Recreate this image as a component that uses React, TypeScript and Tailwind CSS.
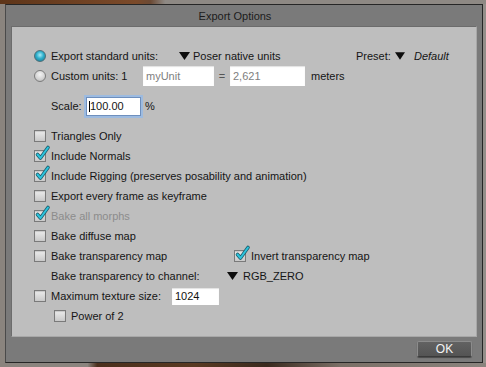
import React from "react"

function Check({ checked = false }: { checked?: boolean }) {
  return (
    <span className="relative block w-[12px] h-[12px] shrink-0 border border-[#7a7a7a] bg-[linear-gradient(#ececec,#c9c9c9)] shadow-[inset_0_1px_1px_rgba(0,0,0,0.15)]">
      {checked && (
        <svg className="absolute -top-[5px] left-[0px] w-[15px] h-[15px] overflow-visible" viewBox="0 0 15 15">
          <polyline points="2.5,8.5 5.5,12 13,1.5" fill="none" stroke="#1d5f6e" strokeWidth="3.6" strokeLinecap="round" strokeLinejoin="round" />
          <polyline points="2.5,8.5 5.5,12 13,1.5" fill="none" stroke="#2cc3dc" strokeWidth="2" strokeLinecap="round" strokeLinejoin="round" />
        </svg>
      )}
    </span>
  )
}

function Radio({ on = false }: { on?: boolean }) {
  return (
    <span
      className={`block w-[12px] h-[12px] shrink-0 rounded-full border ${on ? "border-[#4d6f78] bg-[radial-gradient(circle_at_50%_40%,#a8ecf8_0%,#2fb0cc_45%,#15708a_100%)]" : "border-[#7c7c7c] bg-[radial-gradient(circle_at_50%_35%,#f4f4f4_0%,#d2d2d2_60%,#a9a9a9_100%)]"}`}
    />
  )
}

function Tri({ className = "" }: { className?: string }) {
  return (
    <svg className={`shrink-0 ${className}`} width="11" height="8" viewBox="0 0 11 8">
      <polygon points="0,0 11,0 5.5,8" fill="#0d0d0d" />
    </svg>
  )
}

function Row({ children, className = "" }: { children: React.ReactNode; className?: string }) {
  return <div className={`flex items-center h-[20px] ${className}`}>{children}</div>
}

function Field({ text, className = "" }: { text: React.ReactNode; className?: string }) {
  return (
    <span className={`flex items-center shrink-0 bg-white shadow-[inset_0_1px_1px_rgba(0,0,0,0.12)] ${className}`}>{text}</span>
  )
}

export default function App() {
  return (
    <div className="w-[486px] h-[367px] overflow-hidden flex flex-col bg-[#8a847e] font-['Liberation_Sans',Arial,sans-serif] text-[11px] leading-none text-[#151515]">
      <div className="h-[4px] shrink-0 bg-[linear-gradient(90deg,#5e3519_0%,#7b4a2a_28%,#6b4a35_31%,#8e8984_34%,#8e8984_100%)]" />
      <div className="flex h-[359px] shrink-0">
        <div className="w-[5px] shrink-0 bg-[#8a847e]" />
        <div className="w-[478px] h-[359px] flex flex-col bg-[#7a7a7a] border border-[#262626] border-l-[#4a4a4a]">
          <div className="h-[21px] shrink-0 flex items-center justify-center pr-[18px] pt-[1px] text-[11px] text-[#1c1c1c]">
            Export Options
          </div>

          <div className="mx-[5px] h-[311px] shrink-0 bg-[#bebebe] border border-[#6c6c6c] border-r-[#a8a8a8] border-b-[#a8a8a8] pl-[22px] pt-[19px] flex flex-col">
            <Row>
              <Radio on />
              <span className="ml-[5px] w-[128px]">Export standard units:</span>
              <span className="flex items-center w-[177px]">
                <Tri />
                <span className="ml-[3px]">Poser native units</span>
              </span>
              <span className="w-[39px]">Preset:</span>
              <Tri className="w-[10px]" />
              <span className="ml-[9px] italic">Default</span>
            </Row>
            <Row>
              <Radio />
              <span className="ml-[5px] w-[92px]">Custom units: 1</span>
              <Field text="myUnit" className="w-[71px] h-[20px] pl-[3px] text-[#7e7e7e]" />
              <span className="w-[16px] text-center text-[#555]">=</span>
              <Field text="2,621" className="w-[75px] h-[20px] pl-[3px] text-[#7e7e7e]" />
              <span className="ml-[6px]">meters</span>
            </Row>

            <Row className="mt-[10px] ml-[17px]">
              <span className="w-[35px]">Scale:</span>
              <span className="flex items-center w-[55px] h-[19px] bg-white border border-[#6e8fbd] shadow-[0_0_0_2px_#9dbbe0] pl-[2px]">
                <span className="w-[1px] h-[11px] bg-black" />
                <span>100.00</span>
              </span>
              <span className="ml-[4px]">%</span>
            </Row>

            <Row className="mt-[10px]">
              <Check />
              <span className="ml-[5px]">Triangles Only</span>
            </Row>
            <Row>
              <Check checked />
              <span className="ml-[5px]">Include Normals</span>
            </Row>
            <Row>
              <Check checked />
              <span className="ml-[5px]">Include Rigging (preserves posability and animation)</span>
            </Row>
            <Row>
              <Check />
              <span className="ml-[5px]">Export every frame as keyframe</span>
            </Row>
            <Row>
              <Check checked />
              <span className="ml-[5px] text-[#8c8c8c]">Bake all morphs</span>
            </Row>
            <Row>
              <Check />
              <span className="ml-[5px]">Bake diffuse map</span>
            </Row>
            <Row>
              <Check />
              <span className="ml-[5px] w-[183px]">Bake transparency map</span>
              <Check checked />
              <span className="ml-[5px]">Invert transparency map</span>
            </Row>
            <Row className="ml-[17px]">
              <span className="w-[176px]">Bake transparency to channel:</span>
              <Tri />
              <span className="ml-[5px]">RGB_ZERO</span>
            </Row>
            <Row>
              <Check />
              <span className="ml-[5px] w-[121px]">Maximum texture size:</span>
              <Field text="1024" className="w-[47px] h-[17px] pl-[3px] text-[#111]" />
            </Row>
            <Row className="ml-[20px]">
              <Check />
              <span className="ml-[5px]">Power of 2</span>
            </Row>
          </div>

          <div className="flex-1 flex justify-end items-start pt-[4px] pr-[10px]">
            <button className="w-[55px] h-[16px] flex items-center justify-center rounded-[2px] bg-[linear-gradient(#626262,#545454)] border border-[#8c8c8c] border-b-[#3a3a3a] shadow-[0_1px_1px_rgba(0,0,0,0.4)] text-[12px] text-[#f4f4f4]">
              OK
            </button>
          </div>
        </div>
        <div className="flex-1 bg-[#948f8a]" />
      </div>
      <div className="flex-1 bg-[linear-gradient(90deg,#8a847e_0%,#8a847e_18%,#4b2f1c_20%,#5a3a22_40%,#3a2a1e_55%,#7a6f66_70%,#8a847e_100%)]" />
    </div>
  )
}
